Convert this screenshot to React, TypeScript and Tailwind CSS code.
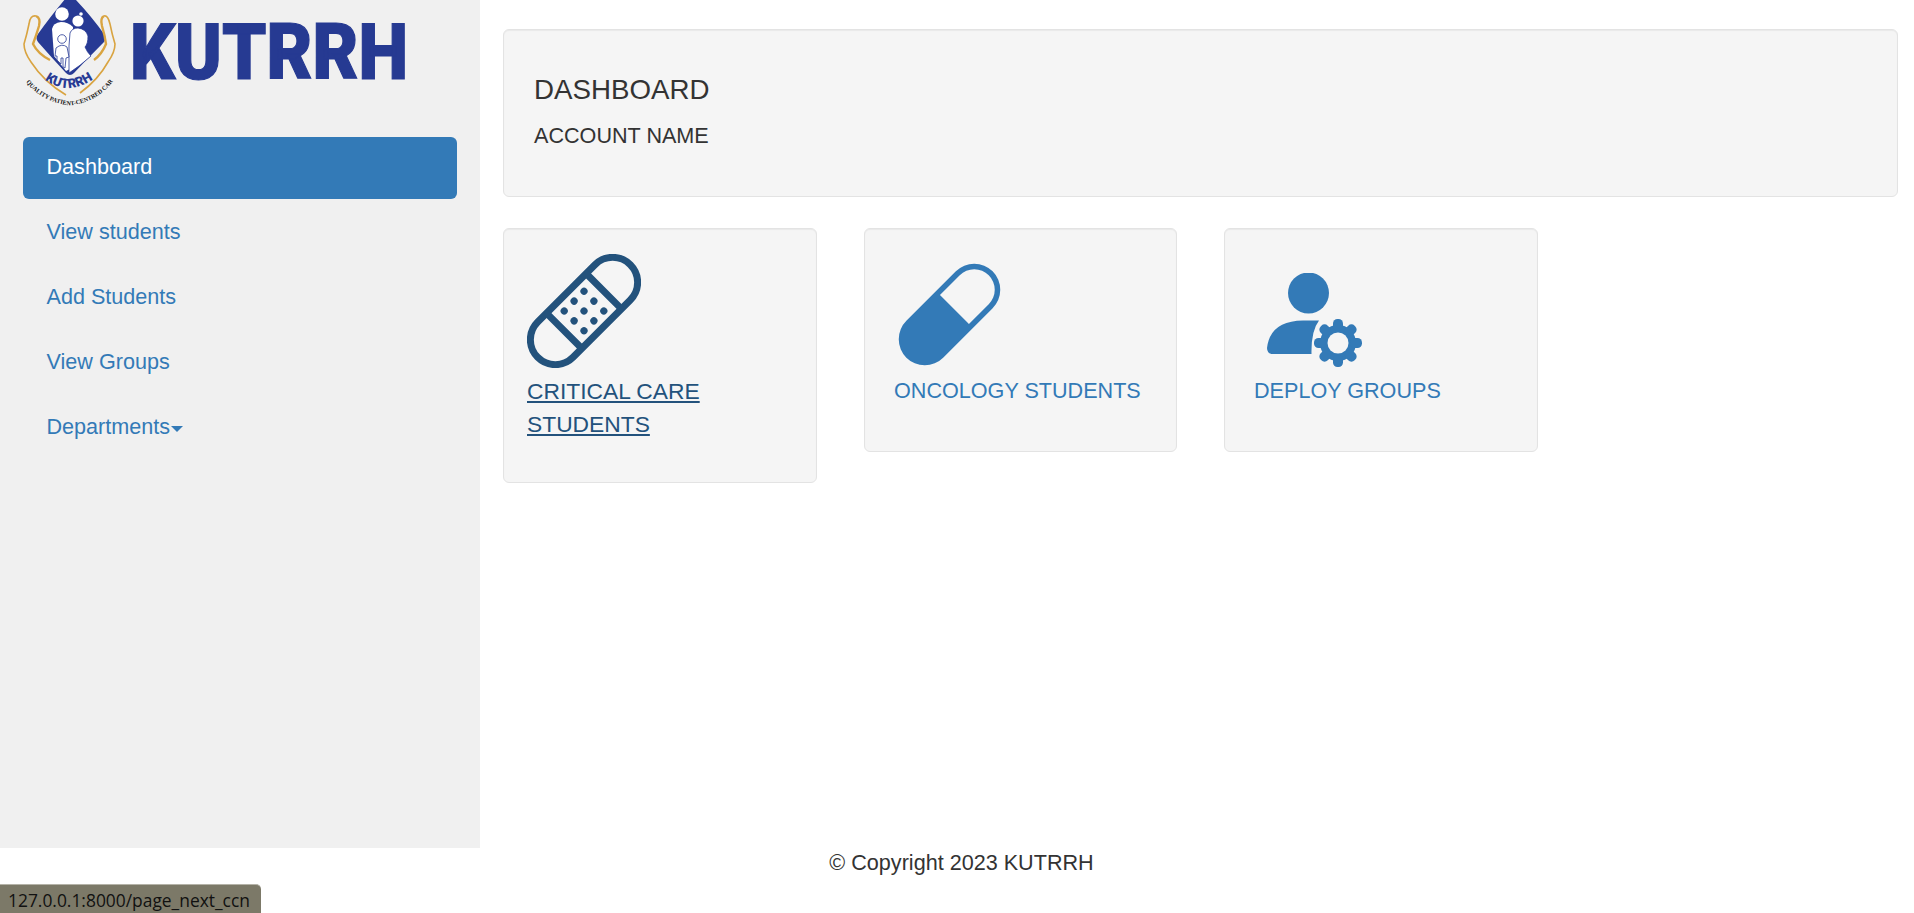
const sans = "font-['Liberation_Sans',Arial,sans-serif]";

function Logo() {
  return (
    <svg width="420" height="112" viewBox="0 0 420 112" className="block">
      <defs>
        <path id="kutrrh-arc" d="M44 79 Q68 98 96 77" />
        <path id="tag-arc" d="M26 82 Q42 102 70 105.5 Q98 102 114 80" />
      </defs>
      <path d="M66 -2 Q71 -3 76 0 Q92 17 104 34 Q107 38 104 42 Q88 58 74 73 Q70 77 66 73 Q52 58 38 42 Q35 38 38 34 Q50 17 66 -2Z" fill="#273a94" />
      <path d="M36 16 Q30 15 29 24 Q27 34 24 44 Q24 52 31 62 Q44 82 66 95" fill="none" stroke="#d9a441" strokeWidth="1.6" />
      <path d="M36 16 Q41 18 39 26 Q36 36 33 44 Q38 54 50 60" fill="none" stroke="#d9a441" strokeWidth="2.4" />
      <path d="M104 16 Q108 15 110 24 Q112 34 115 44 Q115 52 108 62 Q98 80 80 93" fill="none" stroke="#d9a441" strokeWidth="1.6" />
      <path d="M104 16 Q100 18 102 26 Q105 36 106 44 Q102 54 94 60" fill="none" stroke="#d9a441" strokeWidth="2.4" />
      <circle cx="62" cy="14" r="6.8" fill="#fff" />
      <path d="M52 29 Q53 23 61 22 Q68 22 73 27 L72 68 L66 71 L54 56Z" fill="#fff" />
      <circle cx="78" cy="21" r="5.6" fill="#fff" />
      <circle cx="81" cy="14" r="1.8" fill="#fff" />
      <path d="M70 33 Q72 28 78 28 Q86 29 88 36 Q88 44 85 47 Q87 52 91 56 Q80 66 69 73 L69 46Z" fill="#fff" stroke="#273a94" strokeWidth="0.8" />
      <circle cx="62" cy="39" r="4.3" fill="#fff" stroke="#273a94" strokeWidth="0.8" />
      <path d="M56 48 Q62 43 67 47 L69 57 L66 58 L65 68 L63 67 L63 58 L61 58 L61 64 L57 60 L57 56 L55 56Z" fill="#fff" stroke="#273a94" strokeWidth="0.8" />
      <text fontFamily="Roboto, sans-serif" fontWeight="900" fontSize="13" fill="#273a94">
        <textPath href="#kutrrh-arc" startOffset="1" textLength="52" lengthAdjust="spacing">KUTRRH</textPath>
      </text>
      <text fontFamily="Liberation Serif, serif" fontWeight="700" fontSize="6.2" fill="#111">
        <textPath href="#tag-arc" startOffset="0" textLength="106" lengthAdjust="spacingAndGlyphs">QUALITY PATIENT-CENTRED CARE</textPath>
      </text>
      <text x="130" y="79" textLength="278" lengthAdjust="spacingAndGlyphs" fontFamily="Roboto, sans-serif" fontWeight="900" fontSize="77" fill="#263a92" stroke="#263a92" strokeWidth="1.2">KUTRRH</text>
    </svg>
  );
}

function Bandage() {
  const dots = [-14, 0, 14].flatMap((x) => [-14, 0, 14].map((y) => [x, y]));
  return (
    <svg width="114" height="114" viewBox="0 0 114 114" className="block">
      <g transform="translate(57 57) rotate(-45)" fill="none" stroke="#23527c" strokeWidth="7">
        <rect x="-65.5" y="-25" width="131" height="50" rx="25" />
        <path d="M-28 -25V25M28 -25V25" />
        <g fill="#23527c" stroke="none">
          {dots.map(([x, y]) => (
            <circle key={`${x}-${y}`} cx={x} cy={y} r="3.6" />
          ))}
        </g>
      </g>
    </svg>
  );
}

function Pill() {
  return (
    <svg width="103" height="103" viewBox="0 0 103 103" className="block">
      <g transform="translate(51.5 51.5) rotate(-45)">
        <rect x="-61" y="-26" width="122" height="52" rx="26" fill="#337ab7" />
        <path d="M7 -20.5H35A20.5 20.5 0 0 1 35 20.5H7Z" fill="#f5f5f5" />
      </g>
    </svg>
  );
}

function PersonGear() {
  const teeth = [0, 45, 90, 135, 180, 225, 270, 315];
  return (
    <svg width="96" height="96" viewBox="0 0 96 96" className="block">
      <circle cx="41.5" cy="20" r="20.5" fill="#337ab7" />
      <path d="M52 47.5 Q44 58 44.5 81 H6 Q0 81 0 75 Q3 48 36 47.5Z" fill="#337ab7" />
      <g transform="translate(71 70)" fill="#337ab7">
        <circle r="18" />
        {teeth.map((a) => (
          <rect key={a} x="-5" y="-24" width="10" height="12" rx="4.5" transform={`rotate(${a})`} />
        ))}
        <circle r="10.5" fill="#f5f5f5" />
      </g>
    </svg>
  );
}

const navItems = ["View students", "Add Students", "View Groups"];

export default function App() {
  return (
    <div className={`relative flex h-[913px] flex-col overflow-hidden bg-white text-[21.6px] text-[#333] ${sans}`}>
      <div className="flex h-[848px] items-stretch">
        <aside className="flex w-[480px] shrink-0 flex-col bg-[#f0f0f0]">
          <div className="h-[137px] shrink-0">
            <Logo />
          </div>
          <nav className="flex flex-col gap-[3px] pl-[23px] pr-[23px] text-[#337ab7]">
            <a className="flex h-[62px] items-center rounded-[6px] bg-[#337ab7] pb-[2px] pl-[23.5px] text-white">Dashboard</a>
            {navItems.map((item) => (
              <a key={item} className="flex h-[62px] items-center pb-[2px] pl-[23.5px]">{item}</a>
            ))}
            <a className="flex h-[62px] items-center pb-[2px] pl-[23.5px]">
              Departments
              <span className="ml-[1px] mt-[3px] h-0 w-0 border-x-[6px] border-t-[6px] border-x-transparent border-t-[#337ab7]" />
            </a>
          </nav>
        </aside>
        <main className="flex min-w-0 flex-1 flex-col gap-[31px] pl-[23px] pr-[16px] pt-[29px]">
          <section className="flex h-[168px] flex-col rounded-[6px] border border-[#e3e3e3] bg-[#f5f5f5] pl-[30px] pt-[42px] shadow-[inset_0_1px_1px_rgba(0,0,0,0.05)]">
            <h2 className="text-[27.7px] leading-[36px]">DASHBOARD</h2>
            <p className="mt-[13px] leading-[30px]">ACCOUNT NAME</p>
          </section>
          <div className="flex items-start gap-[47px]">
            <a className="flex h-[255px] w-[314px] flex-col rounded-[6px] border border-[#e3e3e3] bg-[#f5f5f5] pl-[23px] pt-[25px] text-[22.8px] text-[#23527c] underline shadow-[inset_0_1px_1px_rgba(0,0,0,0.05)]">
              <Bandage />
              <span className="mt-[7px] block w-[200px] leading-[33px]">CRITICAL CARE STUDENTS</span>
            </a>
            <a className="flex h-[224px] w-[313px] flex-col rounded-[6px] border border-[#e3e3e3] bg-[#f5f5f5] pl-[29px] pt-[34px] text-[#337ab7] shadow-[inset_0_1px_1px_rgba(0,0,0,0.05)]">
              <div className="pl-[4px]">
                <Pill />
              </div>
              <span className="mt-[8px] block leading-[33px]">ONCOLOGY STUDENTS</span>
            </a>
            <a className="flex h-[224px] w-[314px] flex-col rounded-[6px] border border-[#e3e3e3] bg-[#f5f5f5] pl-[29px] pt-[44px] text-[#337ab7] shadow-[inset_0_1px_1px_rgba(0,0,0,0.05)]">
              <div className="pl-[13px]">
                <PersonGear />
              </div>
              <span className="mt-[5px] block leading-[33px]">DEPLOY GROUPS</span>
            </a>
          </div>
        </main>
      </div>
      <footer className="flex flex-1 justify-center leading-[30px]">
        <span className="ml-[9px]">© Copyright 2023 KUTRRH</span>
      </footer>
      <div className="absolute bottom-0 left-0 flex h-[29px] w-[261px] items-center rounded-tr-[5px] border-t border-[#b5b3a8] bg-[#7c7968] pl-[8px] pt-[3px] font-['Open_Sans',sans-serif] text-[17.4px] text-[#111]">
        127.0.0.1:8000/page_next_ccn
      </div>
    </div>
  );
}
